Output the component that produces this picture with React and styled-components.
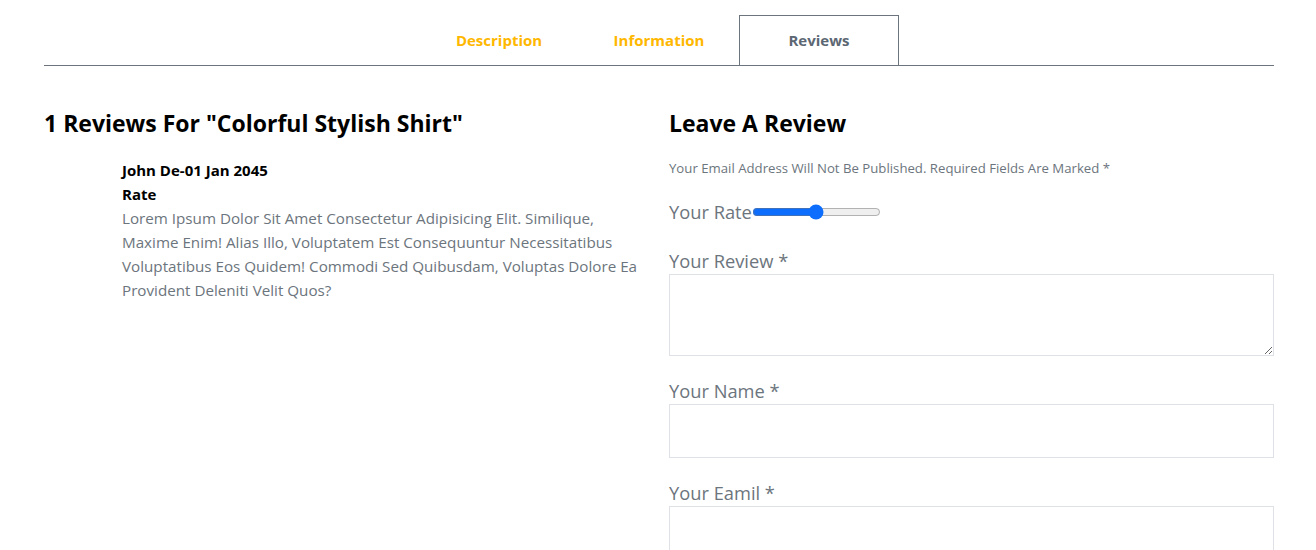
import React from "react";
import styled, { createGlobalStyle } from "styled-components";

const Global = createGlobalStyle`
  body { margin: 0; background: #fff; font-family: "Open Sans", "Noto Sans", sans-serif; }
  * { box-sizing: border-box; }
`;

const Page = styled.div`
  padding: 15px 42px 0 44px;
`;

const TabBar = styled.div`
  display: flex;
  justify-content: center;
  border-bottom: 1px solid #6c757d;
`;

const Tab = styled.div`
  width: 160px;
  height: 50px;
  display: flex;
  align-items: center;
  justify-content: center;
  padding-bottom: 2px;
  font-size: 15px;
  font-weight: 700;
  color: ${(p) => (p.$active ? "#5c6773" : "#ffb700")};
  border: 1px solid ${(p) => (p.$active ? "#6c757d" : "transparent")};
  border-bottom: none;
`;

const Columns = styled.div`
  display: grid;
  grid-template-columns: 1fr 1fr;
  column-gap: 20px;
  padding-top: 41px;
`;

const Heading = styled.h4`
  margin: 0 0 19px;
  font-size: 23px;
  font-weight: 700;
  color: #000;
  line-height: 32px;
`;

const Review = styled.div`
  padding-left: 78px;
`;

const Meta = styled.div`
  font-size: 15px;
  font-weight: 700;
  color: #000;
  line-height: 24px;
`;

const Body = styled.p`
  margin: 0;
  font-size: 15.2px;
  line-height: 24px;
  color: #6c757d;
`;

const Note = styled.p`
  margin: 0 0 20px;
  font-size: 13.2px;
  color: #6c757d;
  line-height: 21px;
`;

const RateRow = styled.div`
  display: flex;
  align-items: center;
  margin-bottom: 23px;
`;

const Label = styled.label`
  display: block;
  font-size: 18.3px;
  color: #6c757d;
  line-height: 26px;
`;

const Range = styled.input`
  width: 129px;
  margin: 0;
  accent-color: #0d6efd;
`;

const Field = styled.div`
  margin-bottom: 22px;
`;

const TextArea = styled.textarea`
  display: block;
  width: 100%;
  height: 82px;
  border: 1px solid #dee2e6;
  font-family: inherit;
  resize: vertical;
`;

const Input = styled.input`
  display: block;
  width: 100%;
  height: 54px;
  border: 1px solid #dee2e6;
`;

export default function App() {
  return (
    <>
      <Global />
      <Page>
        <TabBar>
          <Tab>Description</Tab>
          <Tab>Information</Tab>
          <Tab $active>Reviews</Tab>
        </TabBar>
        <Columns>
          <div>
            <Heading>1 Reviews For "Colorful Stylish Shirt"</Heading>
            <Review>
              <Meta>John De-01 Jan 2045</Meta>
              <Meta>Rate</Meta>
              <Body>
                Lorem Ipsum Dolor Sit Amet Consectetur Adipisicing Elit. Similique, Maxime Enim! Alias Illo,
                Voluptatem Est Consequuntur Necessitatibus Voluptatibus Eos Quidem! Commodi Sed Quibusdam,
                Voluptas Dolore Ea Provident Deleniti Velit Quos?
              </Body>
            </Review>
          </div>
          <div>
            <Heading>Leave A Review</Heading>
            <Note>Your Email Address Will Not Be Published. Required Fields Are Marked *</Note>
            <RateRow>
              <Label as="span">Your Rate</Label>
              <Range type="range" defaultValue={50} />
            </RateRow>
            <Field>
              <Label>Your Review *</Label>
              <TextArea />
            </Field>
            <Field>
              <Label>Your Name *</Label>
              <Input />
            </Field>
            <Field>
              <Label>Your Eamil *</Label>
              <Input />
            </Field>
          </div>
        </Columns>
      </Page>
    </>
  );
}
